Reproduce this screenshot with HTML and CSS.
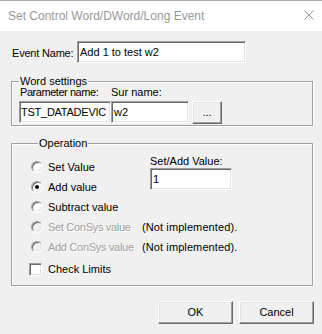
FILE: index.html
```html
<!DOCTYPE html>
<html>
<head>
<meta charset="utf-8">
<link rel="stylesheet" href="styles.css">
</head>
<body>
<div class="window">
  <div class="titlebar">
    <span class="title">Set Control Word/DWord/Long Event</span>
    <svg class="close" width="10" height="10" viewBox="0 0 10 10"><path d="M0.5 0.5L9.5 9.5M9.5 0.5L0.5 9.5" stroke="#999" stroke-width="1" fill="none"/></svg>
  </div>
  <div class="event-row">
    <span class="event-label">Event Name:</span>
    <div class="edit event-edit">Add 1 to test w2</div>
  </div>
  <div class="group word-group">
    <div class="legend">Word settings</div>
    <div class="labels"><span class="param-lbl">Parameter name:</span><span>Sur name:</span></div>
    <div class="fields">
      <div class="edit param-edit">TST_DATADEVIC</div>
      <div class="edit sur-edit">w2</div>
      <div class="btn dots">...</div>
    </div>
  </div>
  <div class="group op-group">
    <div class="legend">Operation</div>
    <div class="op-grid">
      <div class="row r1"><span class="radio"></span><span>Set Value</span></div>
      <div class="row r2"><span class="radio checked"></span><span>Add value</span></div>
      <div class="row r3"><span class="radio"></span><span>Subtract value</span></div>
      <div class="row r4"><span class="radio disabled"></span><span class="disabled-text">Set ConSys value</span></div>
      <div class="row r5"><span class="radio disabled"></span><span class="disabled-text">Add ConSys value</span></div>
      <div class="value-block">
        <div class="value-label">Set/Add Value:</div>
        <div class="edit value-edit">1</div>
      </div>
      <div class="ni n4">(Not implemented).</div>
      <div class="ni n5">(Not implemented).</div>
    </div>
    <div class="check-row"><span class="checkbox"></span><span>Check Limits</span></div>
  </div>
  <div class="buttons">
    <div class="btn action">OK</div>
    <div class="btn action">Cancel</div>
  </div>
</div>
</body>
</html>
```
FILE: styles.css
```css
body {
  margin: 0;
}
.window {
  box-sizing: border-box;
  width: 322px;
  height: 334px;
  overflow: hidden;
  background: #f0f0f0;
  border-top: 1px solid #aaaaaa;
  font: 11px/13px "Liberation Sans", Arial, sans-serif;
  color: #000;
}
.titlebar {
  height: 30px;
  background: #fff;
  display: flex;
  align-items: center;
  padding-left: 8px;
  font: 12px/14px "Liberation Sans", Arial, sans-serif;
  color: #999;
}
.close {
  margin-left: auto;
  margin-right: 8px;
  margin-bottom: 2px;
}
.event-row {
  display: flex;
  align-items: center;
  margin-top: 10px;
  padding-left: 12px;
}
.event-label {
  width: 65px;
  margin-top: 2px;
  letter-spacing: -0.2px;
}
.edit {
  box-sizing: border-box;
  height: 22px;
  background: #fff;
  border: 1px solid;
  border-color: #a0a0a0 #fff #fff #a0a0a0;
  box-shadow: inset 1px 1px 0 #696969, inset -1px -1px 0 #e3e3e3;
  padding: 4px 0 0 2px;
  white-space: nowrap;
  overflow: hidden;
}
.event-edit {
  width: 169px;
}
.group {
  box-sizing: border-box;
  width: 302px;
  margin-left: 11px;
  border: 1px solid #a0a0a0;
  box-shadow: inset 1px 1px 0 #fff, 1px 1px 0 #fff;
}
.legend {
  width: max-content;
  height: 13px;
  margin: -7px 0 0 7px;
  padding: 0 1px;
  background: #f0f0f0;
}
.word-group {
  margin-top: 18px;
  padding-bottom: 1px;
}
.labels {
  display: flex;
  margin-top: -2px;
  padding-left: 8px;
}
.param-lbl {
  width: 91px;
  letter-spacing: -0.45px;
}
.fields {
  display: flex;
  align-items: flex-start;
  margin-top: 2px;
  padding-left: 7px;
}
.param-edit {
  width: 92px;
  padding-left: 1px;
  letter-spacing: -0.25px;
}
.sur-edit {
  width: 78px;
}
.btn {
  box-sizing: border-box;
  display: flex;
  align-items: center;
  justify-content: center;
  background: #f0f0f0;
  border: 1px solid;
  border-color: #fff #696969 #696969 #fff;
  box-shadow: inset -1px -1px 0 #a0a0a0, inset 1px 1px 0 #e3e3e3;
}
.dots {
  width: 30px;
  height: 23px;
  margin-left: 3px;
}
.op-group {
  margin-top: 17px;
  padding: 0 0 6px 19px;
}
.op-grid {
  display: grid;
  grid-template-columns: 111px auto;
  grid-template-rows: repeat(5, 20px);
  margin-top: 7px;
}
.row {
  display: flex;
  align-items: center;
  grid-column: 1;
}
.r1 { grid-row: 1; }
.r2 { grid-row: 2; }
.r3 { grid-row: 3; }
.r4 { grid-row: 4; }
.r5 { grid-row: 5; }
.radio {
  box-sizing: border-box;
  flex: none;
  position: relative;
  width: 12px;
  height: 12px;
  margin-right: 5px;
  border-radius: 50%;
  border: 1px solid;
  border-color: #a0a0a0 #fff #fff #a0a0a0;
  box-shadow: inset 1px 1px 0 #696969, inset -1px -1px 0 #e3e3e3;
  background: #fff;
}
.radio.checked::after {
  content: "";
  position: absolute;
  left: 3px;
  top: 3px;
  width: 4px;
  height: 4px;
  border-radius: 50%;
  background: #000;
}
.radio.disabled {
  background: #f0f0f0;
}
.disabled-text {
  color: #a0a0a0;
  text-shadow: 1px 1px 0 #fff;
  letter-spacing: -0.3px;
}
.value-block {
  grid-column: 2;
  grid-row: 1 / span 3;
  padding-left: 8px;
}
.value-label {
  margin-top: -2px;
}
.value-edit {
  width: 82px;
}
.ni {
  grid-column: 2;
  display: flex;
  align-items: center;
  letter-spacing: 0.1px;
}
.n4 { grid-row: 4; }
.n5 { grid-row: 5; }
.check-row {
  display: flex;
  align-items: center;
  height: 20px;
  margin-top: 2px;
  margin-left: -2px;
}
.checkbox {
  box-sizing: border-box;
  flex: none;
  width: 13px;
  height: 13px;
  margin-right: 6px;
  border: 1px solid;
  border-color: #a0a0a0 #fff #fff #a0a0a0;
  box-shadow: inset 1px 1px 0 #696969, inset -1px -1px 0 #e3e3e3;
  background: #fff;
}
.buttons {
  display: flex;
  justify-content: flex-end;
  gap: 6px;
  margin-top: 15px;
  padding-right: 8px;
}
.action {
  width: 75px;
  height: 23px;
}
```
